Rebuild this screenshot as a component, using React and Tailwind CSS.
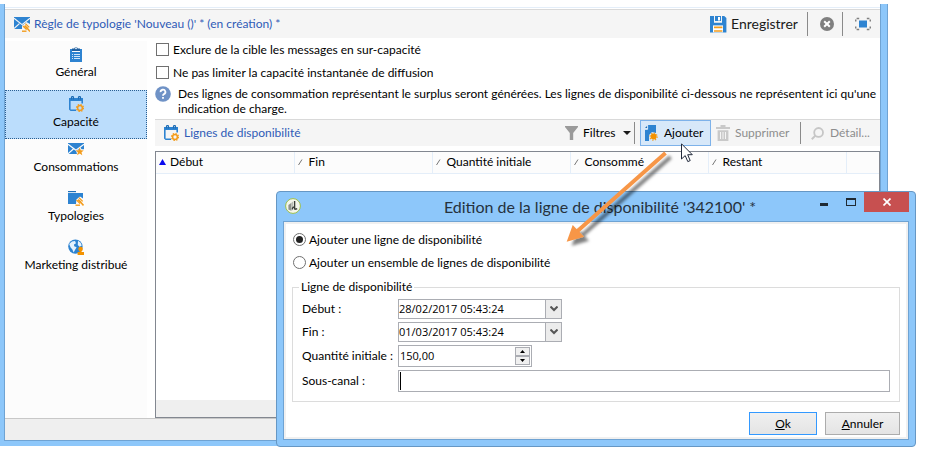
import React from 'react';

const BLUE = '#2d83d1';
const ORANGE = '#f39c1c';

function Svg({ w = 16, h = 16, className = '', children }) {
  return (
    <svg width={w} height={h} viewBox={`0 0 ${w} ${h}`} className={`shrink-0 ${className}`} aria-hidden="true">
      {children}
    </svg>
  );
}

function Hammer({ x = 0, y = 0 }) {
  return (
    <g transform={`translate(${x} ${y})`} stroke={ORANGE} fill="none">
      <path d="M3.4 0.6 7.2 4.4M1 3 4.6 6.6" strokeWidth="1.3" />
      <path d="M2.6 2.6 5.2 5.2" strokeWidth="1.8" />
      <path d="M4.6 4.4 8 8.4" strokeWidth="1.6" />
      <path d="M0 8.2H4.5" strokeWidth="1.4" />
    </g>
  );
}

function MailRuleIcon() {
  return (
    <Svg>
      <path d="M0 1H16V8L12.500 6 8 9.800V13H0Z" fill={BLUE} />
      <path d="M0 2.200 8 8.600 16 2.200M0 12.600 5.400 7.600" stroke="#f5f5f5" strokeWidth="1.200" fill="none" />
      <Hammer x={8} y={7} />
    </Svg>
  );
}

function ClipboardIcon() {
  return (
    <Svg>
      <path d="M2 3H4V6H12V3H14V16H2Z" fill={BLUE} />
      <path d="M4 5V2.6H6.2A1.9 1.9 0 0 1 9.8 2.6H12V5Z" fill="#1f5f9f" />
      <circle cx="8" cy="2.4" r="0.8" fill="#fff" />
      <path d="M4 8.5H5M6 8.5H12M4 10.5H5M6 10.5H12M4 12.5H5M6 12.5H12" stroke="#cfe5f8" />
    </Svg>
  );
}

function CalendarIcon() {
  return (
    <Svg>
      <path d="M1 2H15V7.4H13.4V5H2.6V13.4H8V15H2.6L1 13.4Z" fill={BLUE} />
      <path d="M3.5 3.5V1.5A1 1 0 0 1 5.5 1.5V3.5M10.5 3.5V1.5A1 1 0 0 1 12.5 1.5V3.5" stroke="#1d6cb4" strokeWidth="1.2" fill="none" />
      <circle cx="12" cy="12" r="2.4" fill="none" stroke={ORANGE} strokeWidth="1.5" />
      <circle cx="12" cy="12" r="3.5" fill="none" stroke={ORANGE} strokeWidth="1.2" strokeDasharray="1.4 1.35" />
    </Svg>
  );
}

function MailStarIcon() {
  return (
    <Svg>
      <path d="M0 2H16V8.200L13.600 8.200 12 6 10.400 9 8 9.400 9 13H0Z" fill={BLUE} />
      <path d="M0 3.200 8 9.200 16 3.200M0 12.800 5.400 8" stroke="#fcfcfc" strokeWidth="1.200" fill="none" />
      <path d="M11.7 6.4 12.8 9.2 15.8 9.4 13.5 11.3 14.3 14.3 11.7 12.6 9.1 14.3 9.9 11.3 7.6 9.4 10.6 9.2Z" fill={ORANGE} />
    </Svg>
  );
}

function FolderIcon() {
  return (
    <Svg>
      <path d="M0 1H8V2.2H0Z" fill="#1f6fb8" />
      <path d="M0 3H15V8.6L12 6.4 8.4 9.4 8 14H0Z" fill={BLUE} />
      <Hammer x={7.5} y={7} />
    </Svg>
  );
}

function GlobeIcon() {
  return (
    <Svg>
      <circle cx="7.4" cy="7.6" r="7.2" fill={BLUE} />
      <path d="M1.2 5 4 2.4 7 2 8 4.2 6 5.4 6.2 7.2 8.6 8.2 7 11 5.6 13.6 4.4 10.4 2.6 8.4ZM10 1.8 12.6 3.8 13.8 6.4 11.6 7.8 9.8 6Z" fill="#e6f2fc" />
      <circle cx="12.6" cy="10" r="2.3" fill="#f39200" />
      <path d="M11.6 11H13.6V13H16V16H9.6V13H11.6Z" fill="#f39200" />
    </Svg>
  );
}

function SaveIcon() {
  return (
    <Svg w={17} h={17}>
      <path d="M0 0H4V6.400H12V0H14.2L16.400 2V16.400H0Z" fill={BLUE} />
      <path d="M5 0H11V5H5Z" fill={BLUE} />
      <path d="M8 1H10V4.6H8Z" fill="#fff" />
      <path d="M4 0H5V5.4H11V0H12V6.4H4Z" fill="#f5f5f5" />
      <path d="M3 9.4H13V16.4H3Z" fill="#fff" />
      <path d="M4 11.4H12.4M4 15H12.4" stroke={ORANGE} strokeWidth="1.6" />
    </Svg>
  );
}

function CancelIcon() {
  return (
    <Svg w={14} h={14}>
      <circle cx="7" cy="7" r="7" fill="#7f7f7f" />
      <path d="M4.2 4.2 9.8 9.8M9.8 4.2 4.2 9.8" stroke="#fff" strokeWidth="2" />
    </Svg>
  );
}

function ExpandIcon() {
  return (
    <Svg>
      <path d="M4 4.5H12V11.5H4Z" fill={BLUE} />
      <path d="M0.7 5.4V3.4M1.600 2.4H4.2M11.8 2.4H14.400M15.3 3.4V5.4M15.3 10.6V12.6M14.400 13.600H11.8M4.2 13.600H1.6M0.7 12.6V10.6" stroke="#808080" strokeWidth="1.5" fill="none" />
    </Svg>
  );
}

function HelpIcon() {
  return (
    <Svg>
      <circle cx="8" cy="8" r="7.8" fill="#6f92c6" />
      <path d="M5.6 6.2A2.4 2.3 0 1 1 9 8.1Q8 8.7 8 9.8" stroke="#fff" strokeWidth="1.8" fill="none" />
      <path d="M7.1 11H8.9V12.8H7.1Z" fill="#fff" />
    </Svg>
  );
}

function FilterIcon() {
  return (
    <Svg w={13} h={14}>
      <path d="M0 0H13V1L8.2 7V14H4.8V7L0 1Z" fill="#9a9a9a" />
    </Svg>
  );
}

function AddIcon() {
  return (
    <Svg w={13} h={16}>
      <path d="M3 0H11V8L7 7 4 10V16H0V4H3Z" fill={BLUE} />
      <path d="M0 3 3 0V3Z" fill="#1d6cb4" />
      <path d="M2.6 0V4.4H0" stroke="#d7e8f9" fill="none" />
      <circle cx="8.6" cy="11.6" r="3" fill="#f39200" />
      <circle cx="8.6" cy="11.6" r="3.6" fill="none" stroke={ORANGE} strokeWidth="1.2" strokeDasharray="1.3 1.5" />
    </Svg>
  );
}

function TrashIcon() {
  return (
    <Svg w={14} h={16}>
      <path d="M0 2H4.5V0H9.5V2H14V4H0ZM1.6 5.2H12.4V16H1.6Z" fill="#c9c9c9" />
      <path d="M4.5 7V14M7 7V14M9.5 7V14" stroke="#f5f5f5" />
    </Svg>
  );
}

function LoupeIcon() {
  return (
    <Svg w={13} h={13}>
      <circle cx="7.6" cy="5.4" r="4.4" fill="none" stroke="#c6c6c6" strokeWidth="1.8" />
      <path d="M4.4 8.6 0.8 12.2" stroke="#c6c6c6" strokeWidth="2" />
    </Svg>
  );
}

function AppIcon() {
  return (
    <Svg>
      <circle cx="8" cy="8" r="7.4" fill="#f4f6ec" stroke="#9cbf4a" />
      <path d="M3.4 7 6.200 5V12.800L3.4 11.6Z" fill="#8d918c" />
      <path d="M6.200 5 8 3.600V9L7.200 12.400 6.200 12.800Z" fill="#b9bdb6" />
      <path d="M9.6 3V11.400M7.600 11.4A1.600 1.600 0 0 1 9.6 9.200M9.6 11.400 12.200 10.800" stroke="#3a3f3a" strokeWidth="1.400" fill="none" />
    </Svg>
  );
}

const sections = [
  { label: 'Général', Icon: ClipboardIcon },
  { label: 'Capacité', Icon: CalendarIcon, active: true },
  { label: 'Consommations', Icon: MailStarIcon },
  { label: 'Typologies', Icon: FolderIcon },
  { label: 'Marketing distribué', Icon: GlobeIcon },
];

const columns = ['Début', 'Fin', 'Quantité initiale', 'Consommé', 'Restant'];

function Separator({ className = '' }) {
  return <span className={`w-px self-stretch bg-[#8a8a8a] ${className}`} />;
}

function Sidebar() {
  return (
    <nav className="mt-[3px] flex w-[142px] shrink-0 flex-col bg-[#fcfcfc] pt-[3px]">
      {sections.map(({ label, Icon, active }) => (
        <button
          key={label}
          type="button"
          className={
            active
              ? '-mt-[3px] flex h-[49px] flex-col items-center border border-dotted border-[#2b5f92] bg-[#bbddfc] pt-[5px] leading-[18px]'
              : 'flex h-[49px] flex-col items-center pt-[2px] leading-[18px]'
          }
        >
          <Icon />
          <span className="mt-[1px]">{label}</span>
        </button>
      ))}
    </nav>
  );
}

function Check({ label }) {
  return (
    <label className="flex h-[23px] items-center gap-1">
      <input type="checkbox" className="size-[13px] appearance-none border border-[#707070] bg-white" />
      {label}
    </label>
  );
}

function ListToolbar() {
  return (
    <div className="flex h-[27px] items-center border-t border-[#d9d9d9] bg-[#f5f5f5] pl-2">
      <CalendarIcon />
      <h2 className="ml-[5px] flex-1 text-[#2f5bb7]">Lignes de disponibilité</h2>
      <button type="button" className="flex items-center">
        <FilterIcon />
        <span className="ml-[5px] w-[40px] text-left">Filtres</span>
        <Svg w={8} h={4}><path d="M0 0H8L4 4Z" fill="#1a1a1a" /></Svg>
      </button>
      <Separator className="my-[2px] ml-[3px] mr-[5px]" />
      <button type="button" className="flex w-[71px] items-center gap-[6px] self-stretch border border-[#7db2ea] bg-[#d7e8f9] pl-1">
        <AddIcon />
        Ajouter
      </button>
      <button type="button" disabled className="ml-[5px] flex w-[84px] items-center gap-[5px] text-[#8d8d8d]">
        <TrashIcon />
        Supprimer
      </button>
      <Separator className="my-[2px]" />
      <button type="button" disabled className="ml-[10px] flex w-[69px] items-center gap-[6px] text-[#8d8d8d]">
        <LoupeIcon />
        Détail...
      </button>
    </div>
  );
}

function LinesTable() {
  return (
    <div className="mt-[5px] flex h-[267px] flex-col border border-[#828790] bg-white">
      <table className="w-full table-fixed border-collapse">
        <thead>
          <tr className="h-[21px] border-b border-[#e4eef9] bg-[#fcfcfc]">
            {columns.map((name, i) => (
              <th key={name} className="w-[138px] border-r border-[#e4eef9] p-0 text-left font-normal">
                <span className="flex items-center gap-1 pl-[3px]">
                  {i === 0 ? (
                    <Svg w={7} h={6}><path d="M0 6 3.5 0 7 6Z" fill="#0a0aee" /></Svg>
                  ) : (
                    <Svg w={7} h={6}><path d="M0.5 6 4 0.5" stroke="#777" fill="none" /></Svg>
                  )}
                  {name}
                </span>
              </th>
            ))}
            <th className="p-0" />
          </tr>
        </thead>
      </table>
      <div className="mt-auto h-[17px] bg-[#efefef]" />
    </div>
  );
}

function MainWindow() {
  return (
    <div className="mr-12 border-r border-[#6fa3d3]">
      <div className="border-x-[5px] border-r-[6px] border-b-[5px] border-[#8dc7fa]">
        <div className="-ml-px border-x border-b border-[#6fa3d3] bg-white">
          <div className="h-[4px] border-b border-[#e4eef9]" />
          <header className="mt-px flex h-[29px] items-center border-t border-[#d9d9d9] bg-[#f5f5f5] pl-[9px]">
            <MailRuleIcon />
            <h1 className="ml-1 flex-1 text-[#2f5bb7]">Règle de typologie 'Nouveau ()' * (en création) *</h1>
            <button type="button" className="flex w-[97px] items-center gap-1 text-sm text-[#1a1a1a]">
              <SaveIcon />
              Enregistrer
            </button>
            <Separator className="my-[2px]" />
            <button type="button" aria-label="Annuler" className="mr-2 ml-3"><CancelIcon /></button>
            <Separator className="my-[2px]" />
            <button type="button" aria-label="Agrandir" className="mr-[9px] ml-3"><ExpandIcon /></button>
          </header>
          <div className="flex">
            <Sidebar />
            <main className="ml-2 min-w-0 flex-1">
              <div className="pl-px">
                <Check label="Exclure de la cible les messages en sur-capacité" />
                <Check label="Ne pas limiter la capacité instantanée de diffusion" />
              </div>
              <div className="flex h-[35px] gap-[7px] pt-[2px]">
                <HelpIcon />
                <p className="leading-[15px]">
                  Des lignes de consommation représentant le surplus seront générées. Les lignes de disponibilité ci-dessous ne représentent ici qu'une indication de charge.
                </p>
              </div>
              <ListToolbar />
              <LinesTable />
            </main>
          </div>
          <footer className="h-[22px] border-t border-[#c8c8c8] bg-[#efefef]" />
        </div>
      </div>
    </div>
  );
}

function DateRow({ id, label, value }) {
  return (
    <div className="flex items-center">
      <label htmlFor={id} className="w-[96px] shrink-0">{label}</label>
      <div className="relative flex">
        <select id={id} defaultValue={value} className="h-[20px] w-[164px] appearance-none border border-[#abadb3] bg-white font-['Open_Sans',sans-serif] text-[11px]">
          <option>{value}</option>
        </select>
        <span className="pointer-events-none absolute inset-y-px right-px flex w-4 items-center justify-center border-l border-[#abadb3] bg-[#ececec]">
          <Svg w={8} h={6}><path d="M0.5 0.5 4 4 7.5 0.5" stroke="#555" strokeWidth="2" fill="none" /></Svg>
        </span>
      </div>
    </div>
  );
}

function Spinner({ up }) {
  return (
    <button type="button" aria-label={up ? 'Plus' : 'Moins'} className="flex h-[9px] w-[15px] items-center justify-center border border-[#abadb3] bg-[#f0f0f0]">
      <Svg w={5} h={3}><path d={up ? 'M0 3 2.5 0 5 3Z' : 'M0 0 2.5 3 5 0Z'} fill="#000" /></Svg>
    </button>
  );
}

function Dialog() {
  return (
    <section role="dialog" aria-label="Edition de la ligne de disponibilité" className="absolute top-[191px] right-5 left-[276px] rounded-[4px] border border-[#6697c4] bg-[#8dc7fa] px-[6px] pb-[6px]">
      <div className="flex h-[29px] items-start">
        <span className="w-[107px] pt-[6px] pl-[2px]"><AppIcon /></span>
        <h2 className="flex-1 text-center text-base leading-[29px] text-[#26323d]">
          Edition de la ligne de disponibilité '342100' *
        </h2>
        <button type="button" aria-label="Réduire" className="flex h-6 w-[27px] items-center justify-center">
          <Svg w={8} h={3}><path d="M0 0H8V3H0Z" fill="#1f2a33" /></Svg>
        </button>
        <button type="button" aria-label="Agrandir" className="flex h-5 w-[27px] items-center justify-center">
          <Svg w={10} h={8}><path d="M0 0H10V8H0ZM1 2V7H9V2Z" fill="#1f2a33" fillRule="evenodd" /></Svg>
        </button>
        <button type="button" aria-label="Fermer" className="flex h-5 w-[45px] items-center justify-center bg-[#c75050]">
          <Svg w={8} h={8}><path d="M0.5 0.5 7.5 7.5M7.5 0.5 0.5 7.5" stroke="#fff" strokeWidth="1.7" /></Svg>
        </button>
      </div>
      <form className="border border-[#6fa3d3] bg-white px-2 pt-[6px] pb-1 outline-2 -outline-offset-3 outline-[#f0f0f0]">
        <label className="flex h-[23px] items-center gap-[3px] pl-px">
          <input type="radio" name="mode" defaultChecked className="size-[13px] appearance-none rounded-full border border-[#707070] bg-white checked:bg-[#222] checked:bg-clip-content checked:p-[2px]" />
          Ajouter une ligne de disponibilité
        </label>
        <label className="flex h-[23px] items-center gap-[3px] pl-px">
          <input type="radio" name="mode" className="size-[13px] appearance-none rounded-full border border-[#707070] bg-white" />
          Ajouter un ensemble de lignes de disponibilité
        </label>
        <fieldset className="mt-[5px] border border-[#dcdcdc] px-[9px] pb-[9px]">
          <legend className="-ml-[3px] h-[16px] px-[2px] leading-[16px]">Ligne de disponibilité</legend>
          <div className="flex flex-col gap-[3px] pt-1">
            <DateRow id="debut" label="Début :" value="28/02/2017 05:43:24" />
            <DateRow id="fin" label="Fin :" value="01/03/2017 05:43:24" />
            <div className="flex items-center">
              <label htmlFor="quantite" className="w-[96px] shrink-0 whitespace-nowrap">Quantité initiale :</label>
              <div className="flex h-[22px] w-[134px] items-center border border-[#abadb3] bg-white pr-px">
                <input id="quantite" type="text" defaultValue="150,00" className="min-w-0 flex-1 pl-[1px] font-['Open_Sans',sans-serif] text-[11px] outline-none" />
                <span className="flex flex-col">
                  <Spinner up />
                  <Spinner />
                </span>
              </div>
            </div>
            <div className="flex items-center">
              <label htmlFor="canal" className="w-[96px] shrink-0">Sous-canal :</label>
              <div className="flex h-[22px] flex-1 items-center border border-[#abadb3] bg-white pl-px">
                <span className="h-[18px] w-px bg-black" />
                <input id="canal" type="text" className="h-full min-w-0 flex-1 outline-none" />
              </div>
            </div>
          </div>
        </fieldset>
        <div className="mt-[10px] flex justify-end gap-2">
          <button type="button" className="h-[23px] w-[68px] border border-[#3399ff] bg-linear-to-b from-[#f0f0f0] to-[#e4e4e4]"><u>O</u>k</button>
          <button type="button" className="h-[23px] w-[75px] border border-[#acacac] bg-linear-to-b from-[#f0f0f0] to-[#e4e4e4]"><u>A</u>nnuler</button>
        </div>
      </form>
    </section>
  );
}

function Annotations() {
  return (
    <>
      <svg className="pointer-events-none absolute top-[143px] left-[555px]" width="130" height="120" viewBox="0 0 130 120" aria-hidden="true">
        <defs>
          <filter id="soft" x="-20%" y="-20%" width="140%" height="140%">
            <feDropShadow dx="5" dy="4" stdDeviation="1.8" floodColor="#000" floodOpacity="0.5" />
          </filter>
        </defs>
        <g filter="url(#soft)">
          <path d="M110.500 10 22 88.500" stroke="#f79646" strokeWidth="4" />
          <path d="M11.700 98.700 17.700 82 29 93.700Z" fill="#f79646" />
        </g>
      </svg>
      <svg className="pointer-events-none absolute top-[143px] left-[681px]" width="12" height="20" viewBox="0 0 12 20" aria-hidden="true">
        <path d="M0.5 0.8V16L4.2 12.6 6.8 18.6 9.2 17.6 6.700 11.700H11.300Z" fill="#fff" stroke="#222a3c" />
      </svg>
    </>
  );
}

export default function App() {
  return (
    <div className="relative bg-white pt-1 pb-3 font-['Lato','Open_Sans',sans-serif] text-xs text-black">
      <MainWindow />
      <Dialog />
      <Annotations />
    </div>
  );
}
